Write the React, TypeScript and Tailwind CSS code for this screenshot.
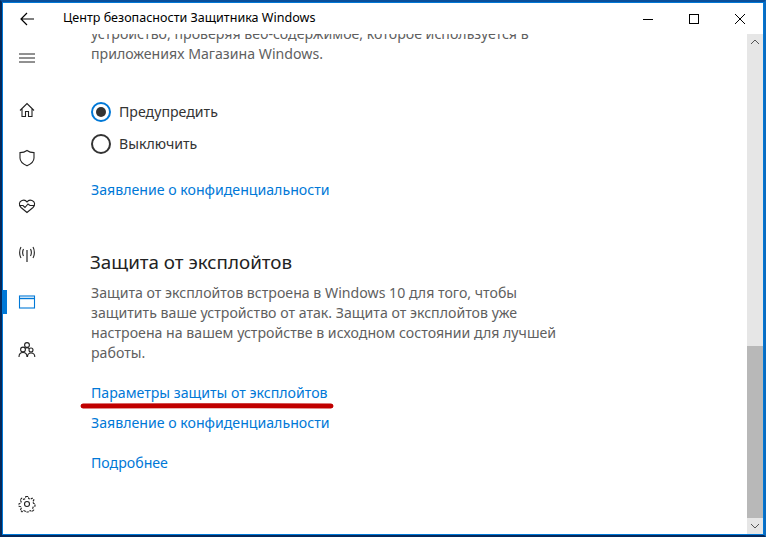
import React from 'react';

const Radio = ({ checked, label }: { checked?: boolean; label: string }) => (
  <div className="flex items-center gap-[8px] h-[32px]">
    <div className={`w-[20px] h-[20px] rounded-full border-2 bg-white flex items-center justify-center ${checked ? 'border-[#0078d7]' : 'border-[#333333]'}`}>
      {checked && <div className="w-[10px] h-[10px] rounded-full bg-[#333333]" />}
    </div>
    <span className="text-[#333333]">{label}</span>
  </div>
);

// icons drawn by hand, lucide's don't match the Windows 10 MDL2 glyphs
const Icon = ({ children, size = 18, color = '#222222' }: { children: React.ReactNode; size?: number; color?: string }) => (
  <svg width={size} height={size} viewBox="0 0 18 18" fill="none" stroke={color} strokeWidth="1.1">
    {children}
  </svg>
);

const NavItem = ({ children, active, className }: { children: React.ReactNode; active?: boolean; className?: string }) => (
  <div className={`relative w-[47px] h-[48px] flex items-center justify-center ${className ?? ''}`}>
    {active && <div className="absolute left-0 top-[12px] w-[4px] h-[24px] bg-[#0078d7]" />}
    {children}
  </div>
);

export default function App() {
  return (
    <div className="w-[766px] h-[537px] overflow-hidden border-2 border-l-[#06285a] border-b-[#06285a] border-t-[#0a4f9a] border-r-[#0a6cc0] font-['Noto_Sans',sans-serif] text-[14.15px]">
      <div className="h-full bg-white border border-[#0078d7] flex flex-col">
        {/* titlebar */}
        <div className="h-[31px] flex items-center shrink-0">
          <div className="w-[47px] flex justify-center">
            <Icon>
              <path d="M16 9H3M9 3L3 9L9 15" stroke="#000000" strokeWidth="1.2" />
            </Icon>
          </div>
          <span className="ml-[13px] text-[12.55px] text-black">Центр безопасности Защитника Windows</span>
          <div className="ml-auto flex items-center">
            <div className="w-[46px] flex justify-center">
              <svg width="12" height="12" fill="none" stroke="#000000"><path d="M1 6.5H11" /></svg>
            </div>
            <div className="w-[46px] flex justify-center">
              <svg width="12" height="12" fill="none" stroke="#000000"><rect x="1.5" y="1.5" width="9" height="9" /></svg>
            </div>
            <div className="w-[46px] flex justify-center">
              <svg width="12" height="12" fill="none" stroke="#000000"><path d="M1 1L11 11M11 1L1 11" /></svg>
            </div>
          </div>
        </div>

        <div className="flex flex-1 min-h-0">
          {/* sidebar */}
          <div className="w-[47px] shrink-0 flex flex-col pb-[6px]">
            <NavItem>
              <Icon><path d="M1 5H17M1 9H17M1 13H17" strokeWidth="1" /></Icon>
            </NavItem>
            <div className="h-[4px]" />
            <NavItem>
              <Icon><path d="M2 9.5L9 2.5L16 9.5M4 8V15.5H7.5V10.5H10.5V15.5H14V8" /></Icon>
            </NavItem>
            <NavItem>
              <Icon><path d="M9 1.5C11 3 13.5 3.6 16 3.6V9C16 12.5 13 15 9 16.8C5 15 2 12.5 2 9V3.6C4.5 3.6 7 3 9 1.5Z" /></Icon>
            </NavItem>
            <NavItem>
              <Icon><path d="M9 15.5L3 10.5C0.5 8 1 4.5 4 3.5C6 2.8 8 3.5 9 5C10 3.5 12 2.8 14 3.5C17 4.5 17.5 8 15 10.5L9 15.5Z" /><path d="M1.5 8.5H5L7 10.5L10 7L12 8.5H16.5" /></Icon>
            </NavItem>
            <NavItem>
              <Icon>
                <path d="M9 5V17" strokeWidth="1.2" />
                <path d="M5.5 4C4.5 6 4.5 9 5.5 11M12.5 4C13.5 6 13.5 9 12.5 11M3 2C1.2 5 1.2 10 3 13M15 2C16.8 5 16.8 10 15 13" />
              </Icon>
            </NavItem>
            <NavItem active>
              <Icon color="#0078d7">
                <rect x="1.5" y="3" width="15" height="12" />
                <path d="M1.5 5.5H16.5" strokeWidth="1.4" />
              </Icon>
            </NavItem>
            <NavItem>
              <Icon>
                <circle cx="9" cy="4" r="2.4" />
                <circle cx="5" cy="8.5" r="2.4" />
                <circle cx="13" cy="9" r="2" />
                <path d="M1 16C1 13 2.5 11.5 5 11.5C7.5 11.5 9 13 9 16M9.5 16C9.5 13.5 11 12 13 12C15 12 16.8 13.5 16.8 16M7.2 7.3C7.8 6.8 8.4 6.6 9 6.6C9.8 6.6 10.6 6.9 11.2 7.6" />
              </Icon>
            </NavItem>
            <NavItem className="mt-auto">
              <Icon>
                <circle cx="9" cy="9" r="2.5" />
                <path d="M7.8 1.5H10.2L10.7 3.6L12.4 4.3L14.2 3.2L15.9 4.9L14.8 6.7L15.5 8.3L17 8.8V11.2L15.3 11.7L14.7 13.3L15.7 15L14 16.7L12.3 15.6L10.7 16.3L10.2 17H7.8L7.3 16.3L5.7 15.6L4 16.7L2.3 15L3.3 13.3L2.7 11.7L1 11.2V8.8L2.5 8.3L3.2 6.7L2.1 4.9L3.8 3.2L5.6 4.3L7.3 3.6Z" strokeDasharray="2.4 1" />
              </Icon>
            </NavItem>
          </div>

          {/* content */}
          <div className="relative flex-1 min-w-0 overflow-hidden pl-[41px]">
            <div className="-mt-[10px] text-[#5f5f5f] leading-[20px]">
              <p className="whitespace-nowrap">устройство, проверяя веб-содержимое, которое используется в</p>
              <p className="whitespace-nowrap">приложениях Магазина Windows.</p>
            </div>
            <div className="mt-[32px]">
              <Radio checked label="Предупредить" />
              <Radio label="Выключить" />
            </div>
            <a className="block mt-[20px] text-[#0078d7] leading-[20px]">Заявление о конфиденциальности</a>
            <h2 className="-ml-[1px] mt-[49px] text-[18.8px] text-[#222] leading-[26px]">Защита от эксплойтов</h2>
            <div className="mt-[8px] text-[#5f5f5f] leading-[20px]">
              <p className="whitespace-nowrap">Защита от эксплойтов встроена в Windows 10 для того, чтобы</p>
              <p className="whitespace-nowrap">защитить ваше устройство от атак. Защита от эксплойтов уже</p>
              <p className="whitespace-nowrap">настроена на вашем устройстве в исходном состоянии для лучшей</p>
              <p className="whitespace-nowrap">работы.</p>
            </div>
            <a className="block mt-[20px] text-[#0078d7] leading-[20px]">Параметры защиты от эксплойтов</a>
            <a className="block mt-[10px] text-[#0078d7] leading-[20px]">Заявление о конфиденциальности</a>
            <a className="block mt-[20px] text-[#0078d7] leading-[20px]">Подробнее</a>
            {/* red marker under the link */}
            <svg className="absolute left-[30px] top-[369px]" width="254" height="6">
              <path d="M3 3 C 80 2.6, 180 2.6, 251 3" stroke="#c00000" strokeWidth="5" strokeLinecap="round" fill="none" />
            </svg>
          </div>

          {/* scrollbar */}
          <div className="w-[16px] shrink-0 bg-[#e6e6e6] flex flex-col">
            <div className="h-[16px] flex items-center justify-center">
              <svg width="10" height="6" fill="none" stroke="#555555"><path d="M1 5L5 1L9 5" /></svg>
            </div>
            <div className="flex-1" />
            <div className="h-[172px] bg-[#b8b8b8]" />
            <div className="h-[16px] flex items-center justify-center">
              <svg width="10" height="6" fill="none" stroke="#555555"><path d="M1 1L5 5L9 1" /></svg>
            </div>
          </div>
        </div>
      </div>
    </div>
  );
}
